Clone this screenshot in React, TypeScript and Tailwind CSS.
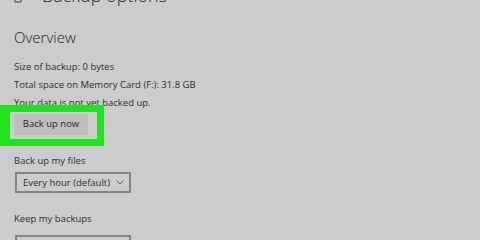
const body = "text-[9.5px] leading-[18px] text-[#2f2f2f]";

function Dropdown({ label }: { label: string }) {
  return (
    <div className="flex h-[21px] w-[116px] items-center justify-between border-2 border-[#858585] pl-[6px] pr-[5px]">
      <span className="text-[9.5px] leading-none text-[#2f2f2f]">{label}</span>
      <svg width="8" height="5" viewBox="0 0 8 5" className="text-[#555555]">
        <path d="M0.5 0.5 L4 4 L7.5 0.5" fill="none" stroke="currentColor" strokeWidth="0.9" />
      </svg>
    </div>
  );
}

export default function App() {
  return (
    <div
      className="h-[240px] w-[480px] overflow-hidden bg-[#cccccc]"
      style={{ fontFamily: '"Open Sans", "Noto Sans", sans-serif' }}
    >
      {/* header, mostly scrolled off the top */}
      <div className="mt-[-17px] flex h-[24px] items-start pl-[14px]">
        <svg width="8" height="12" viewBox="0 0 8 12" className="mt-[8px] text-[#444444]">
          <path d="M1 6 L1 11 L7 11 L7 6 M0 6.5 L4 3 L8 6.5" fill="none" stroke="currentColor" strokeWidth="1" />
        </svg>
        <h1 className="ml-[20px] text-[18px] font-light leading-[24px] text-[#262626]">Backup options</h1>
      </div>

      <div className="flex flex-col pl-[14px]">
        <h2 className="mt-[20px] text-[15px] font-light leading-[20px] text-[#222222]">Overview</h2>

        <p className={`mt-[11px] ${body}`}>Size of backup: 0 bytes</p>
        <p className={body}>Total space on Memory Card (F:): 31.8 GB</p>
        <p className={body}>Your data is not yet backed up.</p>

        <div className="relative mt-[2px] w-[74px]">
          <button className="flex h-[21px] w-[74px] items-center justify-center bg-[#bebebe] text-[9.5px] text-[#2a2a2a]">
            Back up now
          </button>
          {/* highlight ring laid over the button */}
          <div className="pointer-events-none absolute left-[-14px] right-[-16px] top-[-9px] bottom-[-11px] border-[7px] border-l-[10px] border-[#22e122]" />
        </div>

        <p className={`mt-[17px] ${body}`}>Back up my files</p>
        <div className="mt-[2px] pl-[1px]">
          <Dropdown label="Every hour (default)" />
        </div>

        <p className={`mt-[17px] ${body}`}>Keep my backups</p>
        <div className="mt-[7px] pl-[1px]">
          <Dropdown label="Forever (default)" />
        </div>
      </div>
    </div>
  );
}
